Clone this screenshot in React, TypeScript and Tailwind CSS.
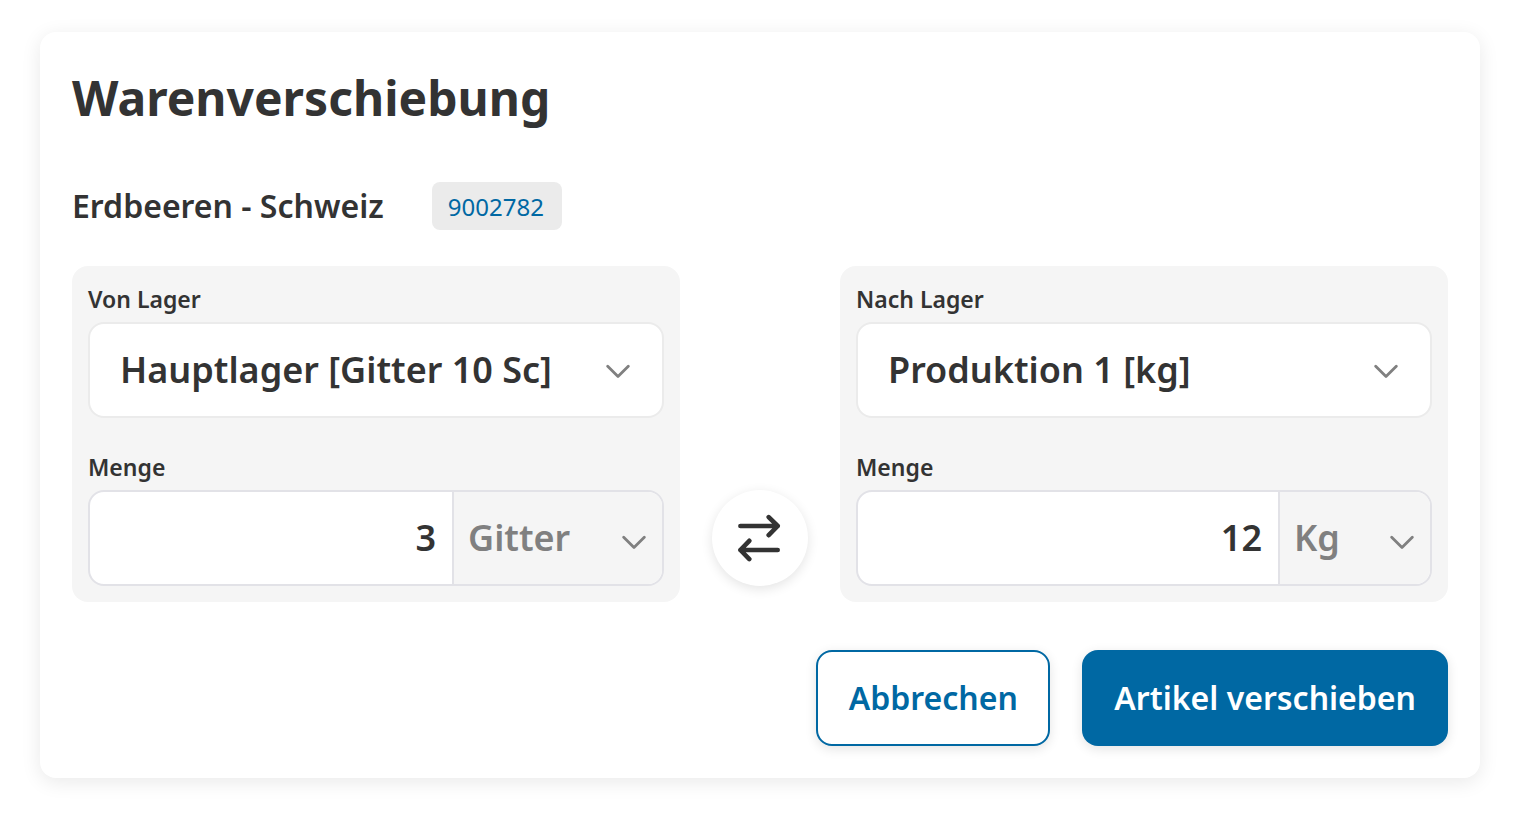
import { ReactNode } from "react";

function Chevron() {
  return (
    <svg viewBox="0 0 24 14" className="h-[14px] w-6 shrink-0" fill="none" stroke="#808080" strokeWidth="2.8" strokeLinecap="round" strokeLinejoin="round" aria-hidden="true">
      <path d="M1.7 2.2L12 12.5 22.3 2.2" />
    </svg>
  );
}

function Panel({ children }: { children: ReactNode }) {
  return <fieldset className="min-w-0 flex-1 rounded-2xl bg-[#f5f5f5] p-4">{children}</fieldset>;
}

interface StockProps {
  id: string;
  label: string;
  store: string;
  amount: string;
  unit: string;
  unitWidth: string;
}

function Stock({ id, label, store, amount, unit, unitWidth }: StockProps) {
  return (
    <Panel>
      <label htmlFor={`${id}-store`} className="block h-10 text-[23px] leading-[34px] font-semibold">{label}</label>
      <div className="grid h-24 items-center rounded-2xl border-2 border-[#ebebeb] bg-white">
        <select id={`${id}-store`} className="col-start-1 row-start-1 h-full w-full appearance-none bg-transparent pr-16 pl-[30px] text-4xl leading-[52px] font-semibold">
          <option>{store}</option>
        </select>
        <span className="pointer-events-none col-start-1 row-start-1 mt-0.5 mr-8 justify-self-end"><Chevron /></span>
      </div>
      <label htmlFor={`${id}-amount`} className="mt-8 block h-10 text-[23px] leading-[34px] font-semibold">Menge</label>
      <div className="flex h-24 overflow-hidden rounded-2xl border-2 border-[#e2e2e7] bg-white">
        <input id={`${id}-amount`} defaultValue={amount} inputMode="numeric" className="min-w-0 flex-1 px-4 text-right text-4xl leading-[52px] font-semibold" />
        <div className={`grid items-center border-l-2 border-[#e2e2e7] bg-[#f5f5f5] ${unitWidth}`}>
          <select aria-label="Einheit" className="col-start-1 row-start-1 h-full w-full appearance-none bg-transparent pr-10 pl-[14px] text-4xl leading-[52px] font-semibold text-[#808080]">
            <option>{unit}</option>
          </select>
          <span className="pointer-events-none col-start-1 row-start-1 mt-2 mr-4 justify-self-end"><Chevron /></span>
        </div>
      </div>
    </Panel>
  );
}

export default function App() {
  return (
    <main className="min-h-screen bg-white px-10 py-8 font-['Noto_Sans',sans-serif] text-[#333333]">
      <form className="rounded-2xl bg-white p-8 shadow-[0_4px_20px_rgba(0,0,0,0.09)]" onSubmit={(e) => e.preventDefault()}>
        <h1 className="text-5xl leading-[68px] font-bold">Warenverschiebung</h1>
        <div className="mt-[50px] flex h-12 items-center gap-12">
          <h2 className="text-[32px] leading-12 font-semibold">Erdbeeren - Schweiz</h2>
          <span className="h-12 min-w-[130px] rounded-lg bg-[#ebebeb] px-4 text-2xl leading-[50px] text-[#0068a3]">9002782</span>
        </div>
        <div className="mt-9 flex gap-8">
          <Stock id="from" label="Von Lager" store="Hauptlager [Gitter 10 Sc]" amount="3" unit="Gitter" unitWidth="w-[210px]" />
          <button type="button" aria-label="Lager tauschen" className="mb-4 flex size-24 shrink-0 items-center justify-center self-end rounded-full bg-white shadow-[0_3px_12px_rgba(0,0,0,0.11)]">
            <svg viewBox="0 0 48 48" className="size-12" fill="none" stroke="#333" strokeWidth="4.6" strokeLinecap="round" strokeLinejoin="round" aria-hidden="true">
              <path d="M4.4 12h37.3M32.7 3.1l9 8.9-9 9.2M41.7 36H4.4M13.3 26.8L4.4 36l8.9 9.1" />
            </svg>
          </button>
          <Stock id="to" label="Nach Lager" store="Produktion 1 [kg]" amount="12" unit="Kg" unitWidth="w-[152px]" />
        </div>
        <div className="mt-12 flex justify-end gap-8">
          <button type="button" className="h-24 min-w-[234px] rounded-2xl border-2 border-[#0068a3] bg-white px-[30px] text-[32px] font-semibold text-[#0068a3] shadow-[0_3px_12px_rgba(0,0,0,0.11)]">Abbrechen</button>
          <button type="submit" className="h-24 rounded-2xl bg-[#0068a3] px-8 text-[32px] font-semibold text-white shadow-[0_3px_12px_rgba(0,0,0,0.11)]">Artikel verschieben</button>
        </div>
      </form>
    </main>
  );
}
